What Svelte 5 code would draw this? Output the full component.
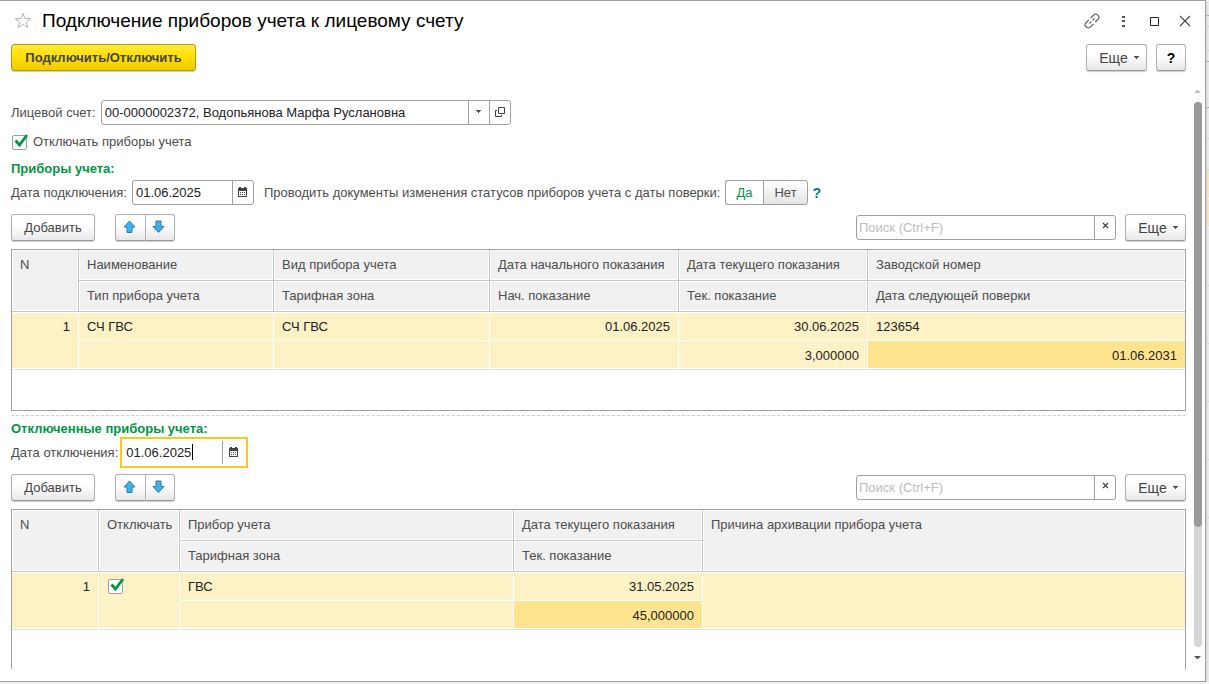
<script>
  let account = $state('00-0000002372, Водопьянова Марфа Руслановна');
  let connectDate = $state('01.06.2025');
  let disconnectDate = $state('01.06.2025');
  let disconnectMeters = $state(true);
  let byCheckDate = $state('Да');

  let meters = [
    { n: 1, name: 'СЧ ГВС', kind: 'СЧ ГВС', type: '', zone: '', startDate: '01.06.2025', start: '', currentDate: '30.06.2025', current: '3,000000', serial: '123654', nextCheck: '01.06.2031' }
  ];

  let disconnected = $state([
    { n: 1, off: true, name: 'ГВС', zone: '', currentDate: '31.05.2025', current: '45,000000', reason: '' }
  ]);

  // rows of the list that stays open under the dialog
  let listRows = [
    { height: 16, kind: 'dark' },
    { height: 11, kind: '' },
    { height: 24, kind: '' },
    { height: 11, kind: 'dark' },
    { height: 46, kind: 'dark' },
    { height: 31, kind: '' },
    { height: 31, kind: '' },
    { height: 29, kind: 'current' },
    { height: 29, kind: 'current' },
    { height: 58, kind: '' },
    { height: 58, kind: '' },
    { height: 58, kind: '' },
    { height: 58, kind: '' },
    { height: 58, kind: '' }
  ];
</script>

{#snippet calendar()}
  <svg width="9" height="10" viewBox="0 0 9 10" aria-hidden="true">
    <path d="M0 1h1V0h2v1h3V0h2v1h1v9H0z" fill="#444" />
    <path d="M1 4h7v5H1z" fill="#fff" />
    <path d="M2 5h1v1H2zM4 5h1v1H4zM6 5h1v1H6zM2 7h1v1H2zM4 7h1v1H4zM6 7h1v1H6z" fill="#444" />
  </svg>
{/snippet}

{#snippet caret()}
  <svg width="5" height="3" viewBox="0 0 5 3" aria-hidden="true">
    <path d="M0 0h5v1H4v1H3v1H2V2H1V1H0z" fill="#555" />
  </svg>
{/snippet}

{#snippet toolbar(id)}
  <div class="toolbar">
    <button class="btn add">Добавить</button>
    <div class="pair">
      <button class="btn" aria-label="Переместить вверх">
        <svg width="13" height="14" viewBox="0 0 13 14" aria-hidden="true">
          <path d="M6.500 1L12 7H9v5.500H4V7H1z" fill="#3fb0ee" stroke="#2a7bb0" stroke-linejoin="round" />
        </svg>
      </button>
      <button class="btn" aria-label="Переместить вниз">
        <svg width="13" height="14" viewBox="0 0 13 14" aria-hidden="true">
          <path d="M6.500 12.500L1 6.500h3V1h5v5.500h3z" fill="#3fb0ee" stroke="#2a7bb0" stroke-linejoin="round" />
        </svg>
      </button>
    </div>
    <div class="field search">
      <input id={id} type="text" placeholder="Поиск (Ctrl+F)" aria-label="Поиск" />
      <button aria-label="Очистить">
        <svg width="7" height="9" viewBox="0 0 7 9" aria-hidden="true">
          <path d="M1 1l5 5M6 1L1 6" stroke="#444" stroke-width="1.200" fill="none" />
        </svg>
      </button>
    </div>
    <button class="btn more">Еще {@render caret()}</button>
  </div>
{/snippet}

<div class="list" aria-hidden="true">
  {#each listRows as row}
    <div class="list-row {row.kind}" style="height: {row.height}px"></div>
  {/each}
</div>

<main class="window">
  <header>
    <button class="icon" aria-label="В избранное">
      <svg width="18" height="17" viewBox="0 0 18 17" aria-hidden="true">
        <path d="M9 1.200l2 5.300 5.800.2-4.500 3.500 1.600 5.400L9 12.400l-4.900 3.200 1.600-5.400L1.200 6.700 7 6.500z" fill="none" stroke="#b0b5bd" />
      </svg>
    </button>
    <h1>Подключение приборов учета к лицевому счету</h1>
    <div class="window-buttons">
      <button class="icon" aria-label="Получить ссылку">
        <svg width="16" height="16" viewBox="0 0 16 16" fill="none" stroke="#555" stroke-width="1.100" aria-hidden="true">
          <path d="M6.500 5.200l3.300-3.300a2.700 2.700 0 0 1 3.800 0l.5.500a2.700 2.700 0 0 1 0 3.800L11.300 9" />
          <path d="M9.500 10.800l-3.300 3.300a2.700 2.700 0 0 1-3.800 0l-.5-.5a2.700 2.700 0 0 1 0-3.800L4.700 7" />
          <path d="M5.500 10.500L7.300 8.700M8.700 7.300l1.800-1.800" />
        </svg>
      </button>
      <button class="icon" aria-label="Меню">
        <svg width="16" height="16" viewBox="0 0 16 16" fill="#555" aria-hidden="true">
          <path d="M7 3h3v2H7zM7 7h3v2H7zM7 12h3v2H7z" />
        </svg>
      </button>
      <button class="icon" aria-label="Развернуть">
        <svg width="16" height="16" viewBox="0 0 16 16" aria-hidden="true">
          <path d="M4.500 4.500h8v8h-8z" fill="none" stroke="#222" />
        </svg>
      </button>
      <button class="icon" aria-label="Закрыть">
        <svg width="16" height="16" viewBox="0 0 16 16" aria-hidden="true">
          <path d="M3 3l10 10M13 3L3 13" fill="none" stroke="#444" stroke-width="1.100" />
        </svg>
      </button>
    </div>
  </header>

  <div class="commands">
    <button class="btn primary">Подключить/Отключить</button>
    <button class="btn more">Еще {@render caret()}</button>
    <button class="btn help">?</button>
  </div>

  <div class="body">
    <div class="content">
      <div class="row">
        <label for="account">Лицевой счет:</label>
        <div class="field account">
          <input id="account" type="text" bind:value={account} />
          <button aria-label="Выбрать">{@render caret()}</button>
          <button aria-label="Открыть">
            <svg width="10" height="10" viewBox="0 0 10 10" fill="none" stroke="#444" aria-hidden="true">
              <path d="M3.500.5h6v6h-6zM2 3.500H.5v6h6V8" />
            </svg>
          </button>
        </div>
      </div>

      <label class="check-row">
        <input class="check" type="checkbox" bind:checked={disconnectMeters} />
        Отключать приборы учета
      </label>

      <h2>Приборы учета:</h2>
      <div class="row">
        <label for="connect-date">Дата подключения:</label>
        <div class="field date">
          <input id="connect-date" type="text" bind:value={connectDate} />
          <button aria-label="Календарь">{@render calendar()}</button>
        </div>
        <span class="question">Проводить документы изменения статусов приборов учета с даты поверки:</span>
        <div class="switch">
          {#each ['Да', 'Нет'] as option}
            <button class:active={byCheckDate === option} onclick={() => byCheckDate = option}>{option}</button>
          {/each}
        </div>
        <a class="hint" href="#help">?</a>
      </div>

      {@render toolbar('search-meters')}
      <div class="grid">
        <table>
          <colgroup>
            <col class="w-n" /><col class="w-name" /><col class="w-kind" /><col class="w-value" /><col class="w-value" /><col />
          </colgroup>
          <thead>
            <tr>
              <th rowspan="2">N</th>
              <th>Наименование</th>
              <th>Вид прибора учета</th>
              <th>Дата начального показания</th>
              <th>Дата текущего показания</th>
              <th class="edge">Заводской номер</th>
            </tr>
            <tr>
              <th>Тип прибора учета</th>
              <th>Тарифная зона</th>
              <th>Нач. показание</th>
              <th>Тек. показание</th>
              <th class="edge">Дата следующей поверки</th>
            </tr>
          </thead>
          <tbody>
            {#each meters as row}
              <tr>
                <td class="num last" rowspan="2">{row.n}</td>
                <td>{row.name}</td>
                <td>{row.kind}</td>
                <td class="num">{row.startDate}</td>
                <td class="num">{row.currentDate}</td>
                <td class="edge">{row.serial}</td>
              </tr>
              <tr>
                <td class="last">{row.type}</td>
                <td class="last">{row.zone}</td>
                <td class="num last">{row.start}</td>
                <td class="num last">{row.current}</td>
                <td class="num last edge selected">{row.nextCheck}</td>
              </tr>
            {/each}
          </tbody>
        </table>
      </div>

      <hr />

      <h2 class="second">Отключенные приборы учета:</h2>
      <div class="row focus-row">
        <label for="disconnect-date">Дата отключения:</label>
        <div class="field date focused">
          <input id="disconnect-date" type="text" bind:value={disconnectDate} />
          <span class="cursor"></span>
          <button aria-label="Календарь">{@render calendar()}</button>
        </div>
      </div>

      {@render toolbar('search-disconnected')}
      <div class="grid">
        <table>
          <colgroup>
            <col class="w-n2" /><col class="w-off" /><col class="w-device" /><col class="w-value" /><col />
          </colgroup>
          <thead>
            <tr>
              <th rowspan="2">N</th>
              <th rowspan="2">Отключать</th>
              <th>Прибор учета</th>
              <th>Дата текущего показания</th>
              <th class="edge" rowspan="2">Причина архивации прибора учета</th>
            </tr>
            <tr>
              <th>Тарифная зона</th>
              <th>Тек. показание</th>
            </tr>
          </thead>
          <tbody>
            {#each disconnected as row}
              <tr>
                <td class="num last" rowspan="2">{row.n}</td>
                <td class="last check-cell" rowspan="2">
                  <input class="check" type="checkbox" aria-label="Отключать" bind:checked={row.off} />
                </td>
                <td>{row.name}</td>
                <td class="num">{row.currentDate}</td>
                <td class="last edge" rowspan="2">{row.reason}</td>
              </tr>
              <tr>
                <td class="last">{row.zone}</td>
                <td class="num last selected">{row.current}</td>
              </tr>
            {/each}
          </tbody>
        </table>
      </div>
    </div>

    <div class="scrollbar">
      <svg width="7" height="5" viewBox="0 0 7 5" aria-hidden="true"><path d="M0 4h7L4 1H3z" fill="#c0c0c0" /></svg>
      <div class="track"><div class="thumb"></div></div>
      <svg width="7" height="5" viewBox="0 0 7 5" aria-hidden="true"><path d="M0 1h7L4 4H3z" fill="#555" /></svg>
    </div>
  </div>
</main>

<style>
  :global(body) {
    margin: 0;
    background: #f1f1f1;
  }

  .list {
    position: absolute;
    inset: 0;
    z-index: -1;
    overflow: hidden;
  }

  .list-row {
    box-sizing: border-box;
    border-bottom: 1px solid #d4d4d4;
  }

  .list-row.dark {
    border-bottom-color: #a0a0a0;
  }

  .list-row.current {
    border-bottom-color: #fff;
    background: #fbeaba;
  }

  .window {
    display: flex;
    flex-direction: column;
    box-sizing: border-box;
    height: calc(100vh - 2px);
    margin-right: 3px;
    border: 1px solid #a0a0a0;
    border-left: none;
    padding-bottom: 12px;
    background: #fff;
    box-shadow: 1px 1px 3px #ccc;
    color: #4d4d4d;
    font: 13px/16px "Liberation Sans", Arial, sans-serif;
  }

  button,
  input {
    box-sizing: border-box;
    margin: 0;
    font: inherit;
    color: inherit;
  }

  svg {
    display: block;
    flex: none;
  }

  header {
    display: flex;
    align-items: center;
    height: 39px;
    padding: 0 12px 0 14px;
  }

  h1 {
    flex: 1;
    margin: 0 0 0 10px;
    color: #000;
    font-size: 19px;
    font-weight: normal;
    line-height: 22px;
  }

  .icon {
    padding: 0;
    border: none;
    background: none;
  }

  .window-buttons {
    display: flex;
    gap: 15px;
  }

  .commands {
    display: flex;
    gap: 9px;
    padding: 4px 19px 12px 11px;
  }

  .btn {
    display: flex;
    align-items: center;
    justify-content: center;
    height: 27px;
    padding: 0 12px;
    border: 1px solid #b0b0b0;
    border-bottom-color: #989898;
    border-radius: 3px;
    background: linear-gradient(#fff 40%, #e8e8e8);
    box-shadow: 0 1px 1px #ccc;
    color: #444;
  }

  .primary {
    width: 185px;
    margin-right: auto;
    border-color: #b39b00;
    background: linear-gradient(#ffea3d, #ffdf00 50%, #edcb00);
    font-weight: bold;
  }

  .more {
    gap: 6px;
    width: 61px;
    padding: 0 6px 0 11px;
    font-size: 14px;
  }

  .help {
    width: 30px;
    padding: 0;
    color: #000;
    font-size: 14px;
    font-weight: bold;
  }

  .body {
    display: flex;
    flex: 1;
    min-height: 0;
  }

  .content {
    flex: 1;
    min-width: 0;
    padding: 17px 4px 0 11px;
    overflow: hidden;
  }

  .scrollbar {
    display: flex;
    flex-direction: column;
    align-items: center;
    width: 15px;
    padding: 6px 0 9px;
    gap: 8px;
    box-sizing: border-box;
  }

  .track {
    flex: 1;
    width: 8px;
    border-radius: 4px;
    background: #d6d6d6;
  }

  .thumb {
    height: 78%;
    border-radius: 4px;
    background: #999;
  }

  .row {
    display: flex;
    align-items: center;
    gap: 5px;
  }

  .field {
    display: flex;
    box-sizing: border-box;
    height: 25px;
    border: 1px solid #a0a0a0;
    border-radius: 3px;
    background: #fff;
    color: #222;
  }

  .field input {
    flex: 1;
    min-width: 0;
    padding: 0 3px;
    border: none;
    outline: none;
    background: none;
  }

  .field button {
    display: flex;
    align-items: center;
    justify-content: center;
    width: 21px;
    padding: 0 0 2px;
    border: none;
    border-left: 1px solid #a0a0a0;
    background: none;
  }

  .account {
    width: 410px;
  }

  .date {
    width: 122px;
  }

  .check-row {
    display: flex;
    align-items: center;
    gap: 4px;
    width: max-content;
    margin-top: 8px;
  }

  .check {
    display: block;
    appearance: none;
    width: 18px;
    height: 18px;
    background: url("data:image/svg+xml,%3Csvg xmlns='http://www.w3.org/2000/svg' width='18' height='18'%3E%3Crect x='1.5' y='2.5' width='14' height='14' rx='1.5' fill='%23fff' stroke='%23a0a0a0'/%3E%3C/svg%3E") no-repeat;
  }

  .check:checked {
    background-image: url("data:image/svg+xml,%3Csvg xmlns='http://www.w3.org/2000/svg' width='18' height='18'%3E%3Crect x='1.5' y='2.5' width='14' height='14' rx='1.5' fill='%23fff' stroke='%23a0a0a0'/%3E%3Cpath d='M4.500 7.500l4 4.500L16 2' fill='none' stroke='%23009646' stroke-width='2.800'/%3E%3C/svg%3E");
  }

  h2 {
    margin: 10px 0 3px;
    color: #009646;
    font-size: 13px;
    line-height: 16px;
  }

  .question {
    margin-left: 5px;
  }

  .switch {
    display: flex;
  }

  .switch button {
    height: 25px;
    padding: 0 10px;
    border: 1px solid #a0a0a0;
    border-radius: 0 3px 3px 0;
    background: linear-gradient(#fff, #e4e4e4);
  }

  .switch button:first-child {
    padding-right: 11px;
    border-right: none;
    border-radius: 3px 0 0 3px;
  }

  .switch .active {
    background: #fff;
    color: #009646;
  }

  .hint {
    color: #0070ba;
    font-size: 14px;
    font-weight: bold;
    text-decoration: none;
  }

  .toolbar {
    display: flex;
    align-items: center;
    margin: 9px 0 8px;
  }

  .add {
    width: 84px;
  }

  .pair {
    display: flex;
    margin: 0 auto 0 20px;
  }

  .pair .btn {
    width: 31px;
    padding: 0 2px 2px 0;
    border-radius: 3px 0 0 3px;
  }

  .pair .btn:last-child {
    width: 29px;
    padding-right: 3px;
    border-left: none;
    border-radius: 0 3px 3px 0;
  }

  .search {
    width: 260px;
    margin-right: 9px;
  }

  .search input {
    padding: 0 2px;
  }

  .search input::placeholder {
    color: #bdbdbd;
    opacity: 1;
  }

  .grid {
    box-sizing: border-box;
    height: 162px;
    border: 1px solid #a0a0a0;
  }

  table {
    width: 100%;
    table-layout: fixed;
    border-collapse: separate;
    border-spacing: 0;
  }

  .w-n { width: 67px; }
  .w-name { width: 195px; }
  .w-kind { width: 216px; }
  .w-value { width: 189px; }
  .w-n2 { width: 87px; }
  .w-off { width: 81px; }
  .w-device { width: 334px; }

  th,
  td {
    box-sizing: border-box;
    padding: 7px 8px 5px;
    text-align: left;
    vertical-align: top;
    white-space: nowrap;
    overflow: hidden;
  }

  th {
    height: 31px;
    border-right: 1px solid #c8c8c8;
    border-bottom: 1px solid #c8c8c8;
    background: #f1f1f1;
    box-shadow: inset 0 0 0 1px #fff;
    font-weight: normal;
  }

  td {
    height: 29px;
    border-right: 1px solid #fff;
    border-bottom: 1px solid #fff;
    background: #fdf1c6;
    color: #222;
  }

  tbody tr:first-child td {
    box-shadow: inset 0 1px #fff;
  }

  td.last {
    border-bottom-color: #e3e3e3;
    box-shadow: inset 0 -1px #fff;
  }

  tbody tr:first-child td.last {
    box-shadow: inset 0 1px #fff, inset 0 -1px #fff;
  }

  .edge {
    border-right: none;
  }

  .num {
    text-align: right;
  }

  .selected {
    background: #ffe48f;
  }

  .check-cell {
    padding: 5px 8px;
  }

  hr {
    margin: 4px 0 0;
    border: none;
    border-top: 1px dashed #d0d0d0;
  }

  h2.second {
    margin: 5px 0 0;
  }

  .focus-row {
    gap: 2px;
    margin-bottom: -3px;
  }

  .focused {
    position: relative;
    align-items: center;
    width: 128px;
    height: 31px;
    border: 2px solid #fbc91c;
    border-radius: 0;
    padding: 0 3px 0 1px;
  }

  .focused button {
    height: 23px;
  }

  .cursor {
    position: absolute;
    top: 5px;
    left: 70px;
    width: 1px;
    height: 16px;
    background: #000;
  }
</style>
